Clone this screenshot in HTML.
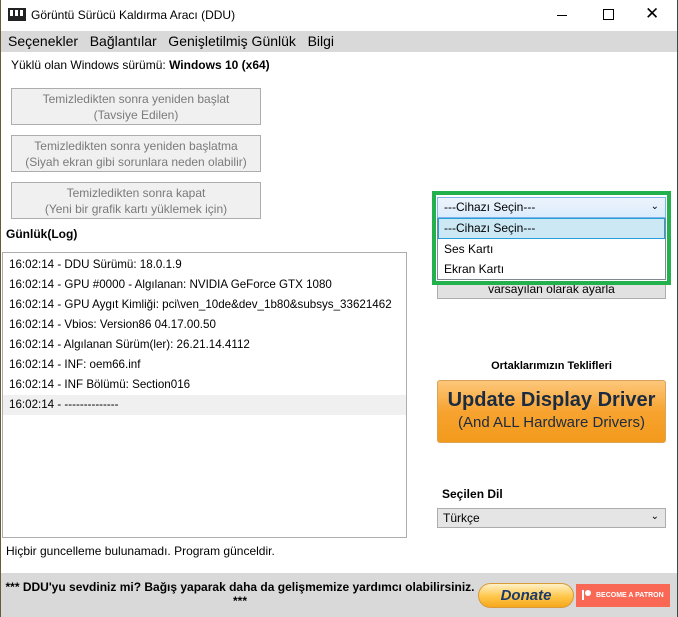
<!DOCTYPE html>
<html><head><meta charset="utf-8"><style>
*{margin:0;padding:0;box-sizing:border-box}
body{width:678px;height:617px;position:relative;background:#fff;font-family:"Segoe UI","Liberation Sans",sans-serif;font-size:12px;color:#000;overflow:hidden}
.a{position:absolute}
.btn{position:absolute;left:11px;width:250px;height:37px;background:#f0f0f0;border:1px solid #adadad;color:#7a7a7a;text-align:center;font-size:12px;line-height:16px;padding-top:2px}
.log div{height:20px;line-height:20px;padding-left:6px;font-size:11.6px}
</style></head><body>
<div class="a" style="left:0;top:0;width:1px;height:617px;background:#6b5a3a"></div>
<div class="a" style="right:0;top:0;width:1px;height:617px;background:#2f4f4f"></div>
<div class="a" style="left:8px;top:8px;width:18px;height:13px;background:#222"></div>
<div class="a" style="left:10px;top:10px;width:14px;height:6px;background:repeating-linear-gradient(90deg,#fff 0 3px,#222 3px 5px)"></div>
<div class="a" style="left:31px;top:8px;font-size:12px">Görüntü Sürücü Kaldırma Aracı (DDU)</div>
<div class="a" style="left:557px;top:15px;width:10px;height:1px;background:#000"></div>
<div class="a" style="left:603px;top:9px;width:11px;height:11px;border:1px solid #000"></div>
<div class="a" style="left:645px;top:4px;font-size:17px;font-weight:300">✕</div>
<div class="a" style="left:1px;top:31px;width:676px;height:21px;background:#d9d9d9"></div>
<div class="a" style="left:8px;top:33px;font-size:14px;word-spacing:0">Seçenekler&nbsp;&nbsp;&nbsp;Bağlantılar&nbsp;&nbsp;&nbsp;Genişletilmiş Günlük&nbsp;&nbsp;&nbsp;Bilgi</div>
<div class="a" style="left:11px;top:58px">Yüklü olan Windows sürümü: <b>Windows 10 (x64)</b></div>
<div class="btn" style="top:88px">Temizledikten sonra yeniden başlat<br>(Tavsiye Edilen)</div>
<div class="btn" style="top:135px">Temizledikten sonra yeniden başlatma<br>(Siyah ekran gibi sorunlara neden olabilir)</div>
<div class="btn" style="top:182px">Temizledikten sonra kapat<br>(Yeni bir grafik kartı yüklemek için)</div>
<div class="a" style="left:6px;top:227px;font-weight:bold">Günlük(Log)</div>
<div class="a log" style="left:2px;top:252px;width:405px;height:286px;border:1px solid #adadad;padding-top:2px">
<div>16:02:14 - DDU Sürümü: 18.0.1.9</div>
<div>16:02:14 - GPU #0000 - Algılanan: NVIDIA GeForce GTX 1080</div>
<div>16:02:14 - GPU Aygıt Kimliği: pci\ven_10de&amp;dev_1b80&amp;subsys_33621462</div>
<div>16:02:14 - Vbios: Version86 04.17.00.50</div>
<div>16:02:14 - Algılanan Sürüm(ler): 26.21.14.4112</div>
<div>16:02:14 - INF: oem66.inf</div>
<div>16:02:14 - INF Bölümü: Section016</div>
<div style="background:#f0f0f0">16:02:14 - --------------</div>
</div>
<div class="a" style="left:437px;top:275px;width:229px;height:24px;background:#e1e1e1;border:1px solid #adadad;text-align:center;line-height:26px">varsayılan olarak ayarla</div>
<div class="a" style="left:432px;top:191px;width:239px;height:94px;border:4px solid #22b14c;background:#fff"></div>
<div class="a" style="left:437px;top:197px;width:229px;height:21px;background:linear-gradient(#ecf4fc,#dcecfc);border:1px solid #7eb4ea;line-height:19px;padding-left:6px">---Cihazı Seçin---<span style="position:absolute;right:6px;top:-1px;font-size:10px">⌄</span></div>
<div class="a" style="left:437px;top:218px;width:229px;height:62px;border:1px solid #828790;border-top:none;background:#fff">
<div style="height:21px;background:#cce8f5;border:1px solid #26a0da;line-height:19px;padding-left:5px">---Cihazı Seçin---</div>
<div style="height:20px;line-height:20px;padding-left:6px">Ses Kartı</div>
<div style="height:20px;line-height:20px;padding-left:6px">Ekran Kartı</div></div>
<div class="a" style="left:437px;top:360px;width:229px;text-align:center;font-weight:bold;font-size:11px">Ortaklarımızın Teklifleri</div>
<div class="a" style="left:437px;top:380px;width:229px;height:63px;border:1px solid #d9a35a;border-radius:3px;background:linear-gradient(#fdc77a,#f7a330 50%,#f29a1c);text-align:center;color:#1c2b3f">
<div style="font-size:20px;font-weight:bold;margin-top:6px;line-height:26px">Update Display Driver</div>
<div style="font-size:15px;line-height:20px">(And ALL Hardware Drivers)</div></div>
<div class="a" style="left:442px;top:487px;font-weight:bold">Seçilen Dil</div>
<div class="a" style="left:437px;top:508px;width:229px;height:20px;background:#e5e5e5;border:1px solid #acacac;line-height:18px;padding-left:5px">Türkçe<span style="position:absolute;right:6px;top:-1px;font-size:10px">⌄</span></div>
<div class="a" style="left:6px;top:544px">Hiçbir guncelleme bulunamadı. Program günceldir.</div>
<div class="a" style="left:1px;top:573px;width:676px;height:44px;background:#d9d9d9"></div>
<div class="a" style="left:4px;top:580px;width:472px;text-align:center;font-weight:bold;font-size:12px;line-height:14px">*** DDU'yu sevdiniz mi? Bağış yaparak daha da gelişmemize yardımcı olabilirsiniz.<br>***</div>
<div class="a" style="left:478px;top:583px;width:96px;height:25px;border-radius:13px;border:1px solid #d89a3a;background:linear-gradient(#fff1c7,#ffc64a 55%,#f7a81d);text-align:center;font:italic bold 15px 'Liberation Sans',sans-serif;color:#1a3a6e;line-height:23px">Donate</div>
<div class="a" style="left:576px;top:584px;width:94px;height:23px;background:#f96854;color:#fff;font:bold 7px 'Liberation Sans',sans-serif;line-height:23px;padding-left:20px">BECOME A PATRON</div>
<div class="a" style="left:582px;top:590px;width:2px;height:10px;background:#fff"></div>
<div class="a" style="left:585px;top:590px;width:6px;height:6px;border-radius:50%;background:#fff"></div>
</body></html>
